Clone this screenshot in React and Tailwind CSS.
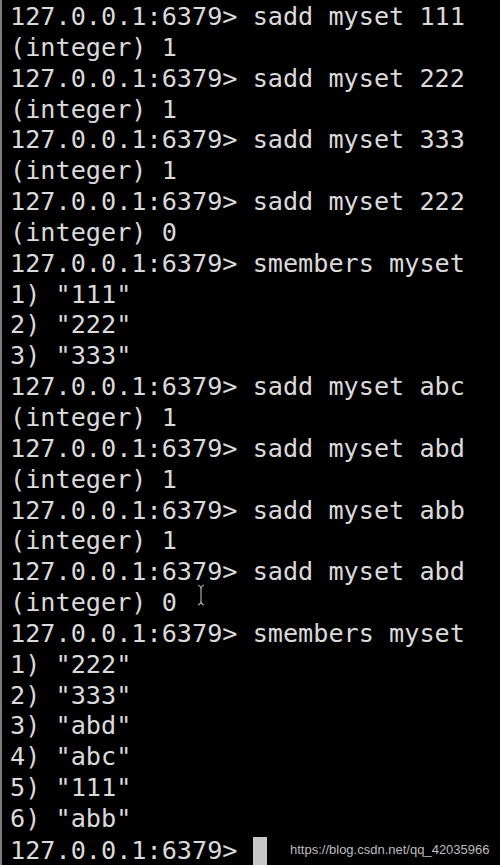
const lines = [
  "127.0.0.1:6379> sadd myset 111",
  "(integer) 1",
  "127.0.0.1:6379> sadd myset 222",
  "(integer) 1",
  "127.0.0.1:6379> sadd myset 333",
  "(integer) 1",
  "127.0.0.1:6379> sadd myset 222",
  "(integer) 0",
  "127.0.0.1:6379> smembers myset",
  '1) "111"',
  '2) "222"',
  '3) "333"',
  "127.0.0.1:6379> sadd myset abc",
  "(integer) 1",
  "127.0.0.1:6379> sadd myset abd",
  "(integer) 1",
  "127.0.0.1:6379> sadd myset abb",
  "(integer) 1",
  "127.0.0.1:6379> sadd myset abd",
  "(integer) 0",
  "127.0.0.1:6379> smembers myset",
  '1) "222"',
  '2) "333"',
  '3) "abd"',
  '4) "abc"',
  '5) "111"',
  '6) "abb"',
];

const App = () => {
  return (
    <div className="relative w-[500px] h-[865px] overflow-hidden bg-black border-l-2 border-[#7a7a7a]">
      <div className="pl-2 pt-[2px] font-['DejaVu_Sans_Mono',monospace] text-[25.2px] leading-[30.85px] text-[#dadada] whitespace-pre">
        {lines.map((l, i) => (
          <div key={i}>{l}</div>
        ))}
        <div className="flex items-center">
          <span>127.0.0.1:6379&gt; </span>
          <span className="w-[14px] h-[31px] mt-[2px] bg-[#c6c6c6]"></span>
        </div>
      </div>

      {/* mouse i-beam */}
      <svg className="absolute left-[194px] top-[584px]" width="10" height="22" viewBox="0 0 10 22">
        <path d="M2 1 Q5 2 5 5 L5 17 Q5 20 2 21 M8 1 Q5 2 5 5 M5 17 Q5 20 8 21" stroke="#9a9a9a" strokeWidth="1.3" fill="none" />
      </svg>

      <div className="absolute left-[288px] bottom-[6px] font-['Liberation_Sans',Arial,sans-serif] text-[13px] text-[#bdbdbd]">
        https://blog.csdn.net/qq_42035966
      </div>
    </div>
  );
};

export default App;
